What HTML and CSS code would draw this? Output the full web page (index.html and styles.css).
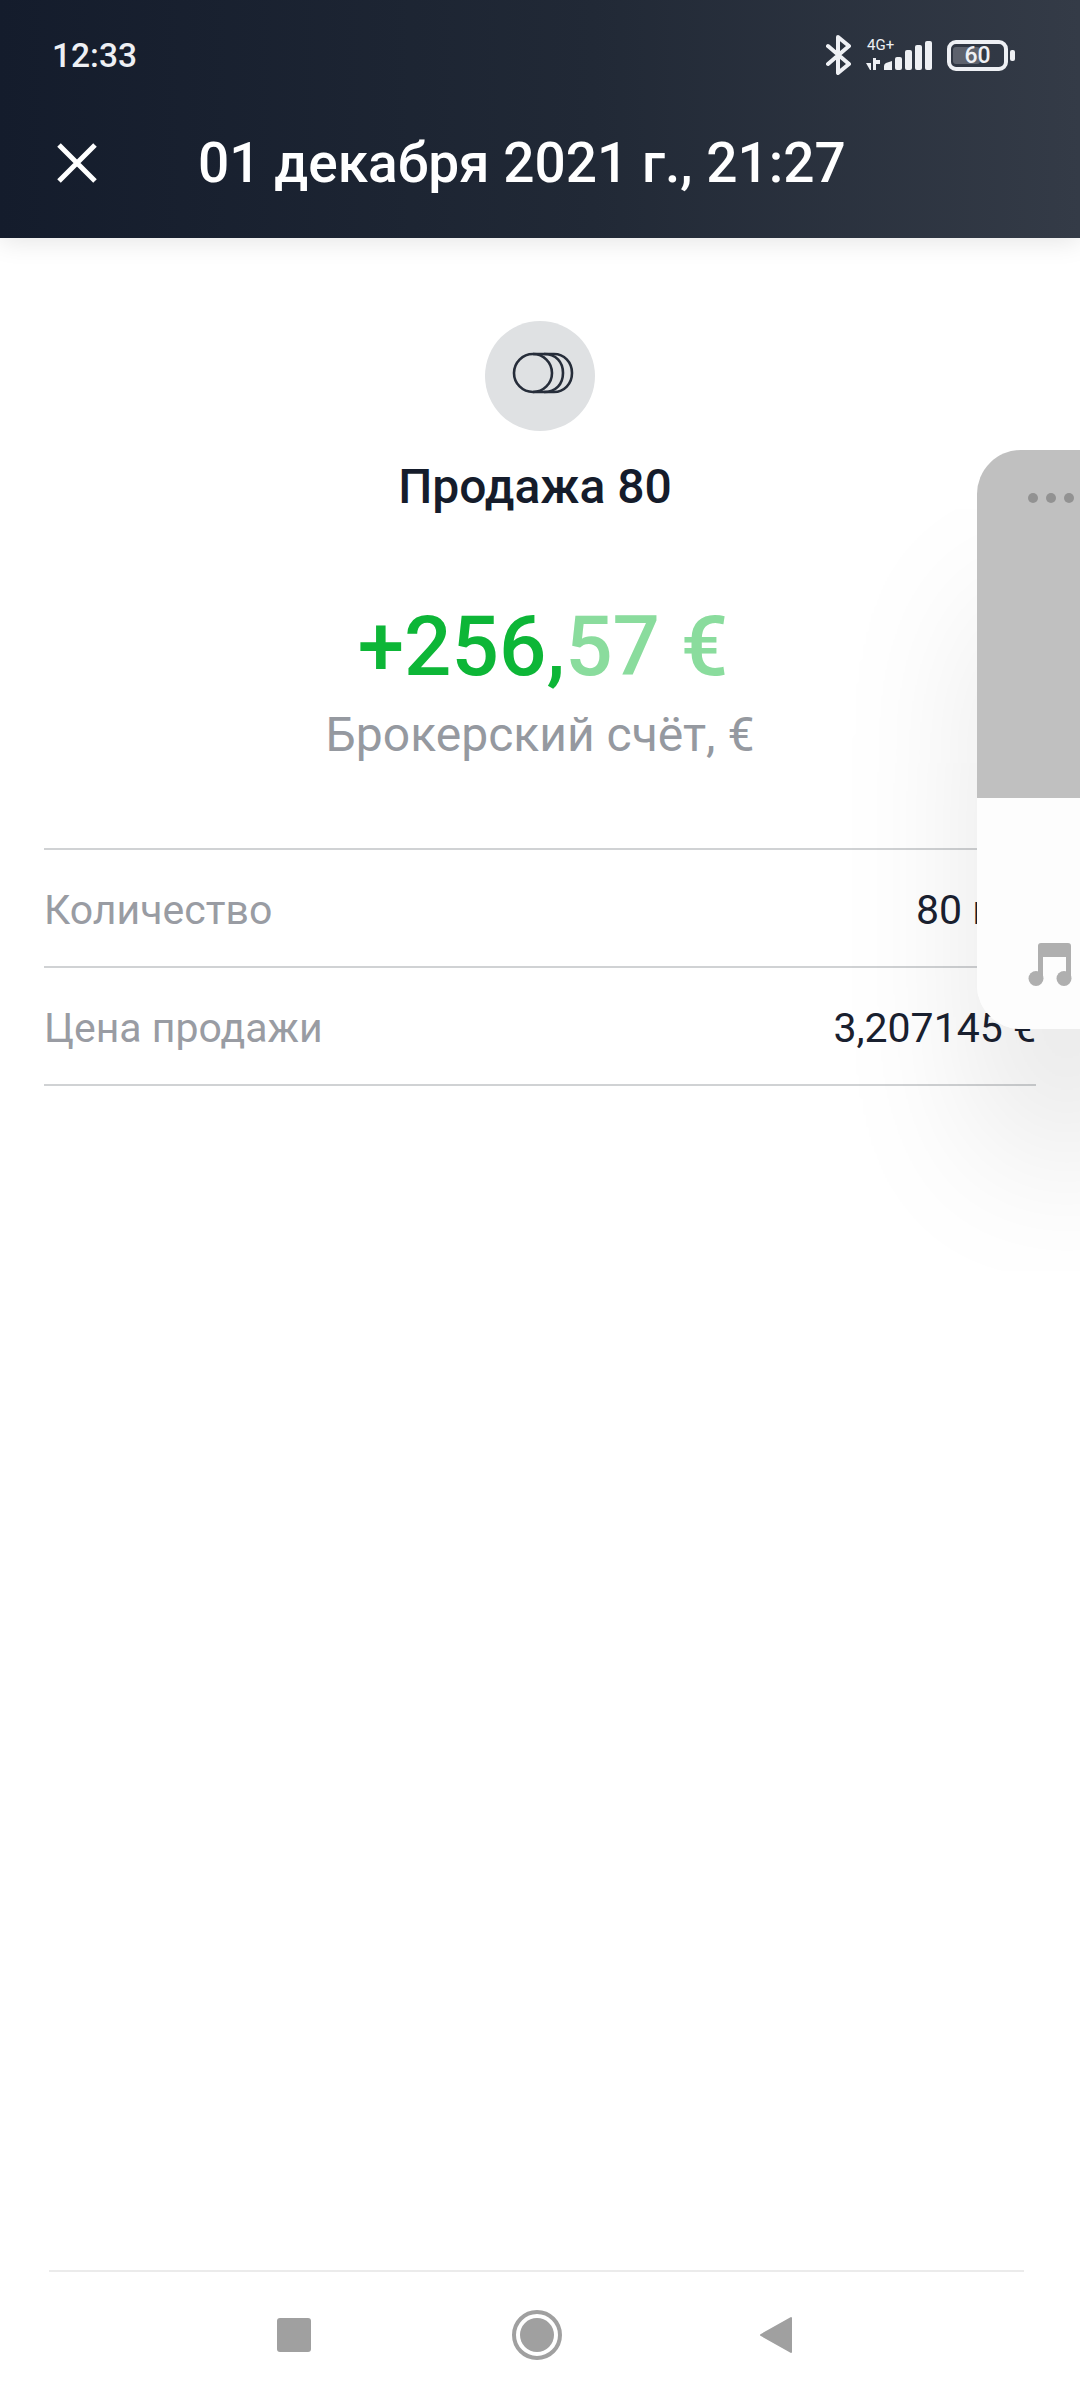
FILE: index.html
```html
<!DOCTYPE html>
<html lang="ru">
<head>
  <meta charset="UTF-8">
  <meta name="viewport" content="width=device-width, initial-scale=1.0">
  <title>Продажа 80</title>
  <link rel="stylesheet" href="styles.css">
</head>
<body>
  <div class="screen">
    <header class="header">
      <div class="status-bar">
        <span class="status-time">12:33</span>
        <div class="status-icons">
          <svg class="icon-bt" width="26" height="40" viewBox="0 0 26 40">
            <path d="M2 11 L23 29 L12 38 L12 2 L23 11 L2 29" fill="none" stroke="#eef0f4" stroke-width="4" stroke-linejoin="round" stroke-linecap="round"/>
          </svg>
          <svg class="icon-signal" width="66" height="34" viewBox="0 0 66 34">
            <text x="1" y="12" class="signal-label">4G+</text>
            <path d="M0 25 H5 V32 H4 Z M7 20 H10 V22 H14 V26 H10 V32 H7 Z" fill="#eef0f4"/>
            <path d="M18 32 V28 Q18 26 20 25 L26 23 V32 Z" fill="#eef0f4"/>
            <rect x="29" y="19" width="7" height="13" rx="2" fill="#eef0f4"/>
            <rect x="39" y="12" width="7" height="20" rx="2" fill="#eef0f4"/>
            <rect x="49" y="7" width="7" height="25" rx="2" fill="#eef0f4"/>
            <rect x="59" y="3" width="7" height="29" rx="2" fill="#eef0f4"/>
          </svg>
          <div class="battery">
            <div class="battery-body">
              <div class="battery-fill"></div>
              <span class="battery-level">60</span>
            </div>
            <div class="battery-nub"></div>
          </div>
        </div>
      </div>
      <div class="title-bar">
        <svg class="icon-close" width="40" height="40" viewBox="0 0 40 40">
          <path d="M2 2 L38 38 M38 2 L2 38" stroke="#fff" stroke-width="5" fill="none"/>
        </svg>
        <h1 class="title">01 декабря 2021 г., 21:27</h1>
      </div>
    </header>

    <main class="content">
      <div class="op-icon">
        <svg width="64" height="44" viewBox="0 0 64 44">
          <path d="M32 3 H42 C52 3 60 11 60 22 C60 33 52 41 42 41 H32" fill="none" stroke="#262d3a" stroke-width="2.6"/>
          <path d="M32 3 C44 3 51 11 51 22 C51 33 44 41 32 41" fill="none" stroke="#262d3a" stroke-width="2.6"/>
          <circle cx="21" cy="22" r="19" fill="none" stroke="#262d3a" stroke-width="2.6"/>
          <path d="M21 3 H32 M21 41 H32" stroke="#262d3a" stroke-width="2.6"/>
        </svg>
      </div>
      <div class="op-name">Продажа 80</div>
      <div class="amount">+256,<span class="amount-cents">57 €</span></div>
      <div class="account">Брокерский счёт, €</div>

      <div class="details">
        <div class="row">
          <span class="row-label">Количество</span>
          <span class="row-value">80 шт.</span>
        </div>
        <div class="row">
          <span class="row-label">Цена продажи</span>
          <span class="row-value">3,207145 €</span>
        </div>
      </div>
    </main>

    <nav class="nav-bar">
      <div class="nav-buttons">
        <div class="nav-square"></div>
        <div class="nav-home"><div class="nav-home-dot"></div></div>
        <svg class="nav-back" width="34" height="38" viewBox="0 0 34 38">
          <path d="M32 2 V36 L2 19 Z" fill="#a0a0a0" stroke="#a0a0a0" stroke-width="2" stroke-linejoin="round"/>
        </svg>
      </div>
    </nav>

    <!-- плавающее окно поверх экрана -->
    <aside class="float-window">
      <div class="float-top">
        <i class="dot"></i><i class="dot"></i><i class="dot"></i>
      </div>
      <div class="float-bottom">
        <svg width="44" height="44" viewBox="0 0 44 44">
          <path d="M10 3 Q10 0 13 0 H40 Q43 0 43 3 V37 H38 V14 H15 V37 H10 Z" fill="#afafaf"/>
          <circle cx="8" cy="35.5" r="7.5" fill="#afafaf"/>
          <circle cx="36" cy="35.5" r="7.5" fill="#afafaf"/>
        </svg>
      </div>
    </aside>
  </div>
</body>
</html>
```

FILE: styles.css
```css
*{
  margin: 0;
  padding: 0;
  box-sizing: border-box;
}
html,body{
  width: 1080px;
  height: 2400px;
  overflow: hidden;
  background: #fff;
}
body{
  font-family: Roboto, "Noto Sans", sans-serif;
}
.screen{
  width: 1080px;
  height: 2400px;
  display: flex;
  flex-direction: column;
  position: relative;
  overflow: hidden;
}

/* header */
.header{
  height: 238px;
  flex: none;
  background: linear-gradient(90deg, #141c2c 0%, #212936 55%, #343b47 100%);
  box-shadow: 0 4px 24px rgba(0,0,0,.1);
  position: relative;
  z-index: 1;
}
.status-bar{
  height: 110px;
  display: flex;
  align-items: center;
  justify-content: space-between;
  padding: 0 65px 0 52px;
}
.status-time{
  font-size: 33.5px;
  font-weight: 500;
  color: #eef0f4;
}
.status-icons{
  display: flex;
  align-items: center;
}
.icon-bt{
  margin-right: 14px;
}
.icon-signal{
  margin-right: 15px;
}
.signal-label{
  font-family: Roboto, sans-serif;
  font-size: 15px;
  fill: #eef0f4;
}
.battery{
  display: flex;
  align-items: center;
  gap: 2px;
}
.battery-body{
  width: 61px;
  height: 31px;
  border: 4px solid #eef0f4;
  border-radius: 9px;
  position: relative;
  display: flex;
  align-items: center;
  justify-content: center;
}
.battery-fill{
  position: absolute;
  left: 2px;
  top: 3px;
  bottom: 3px;
  width: 27px;
  border-radius: 3px;
  background: #5d626d;
}
.battery-level{
  font-size: 23px;
  font-weight: 500;
  color: #eef0f4;
  position: relative;
}
.battery-nub{
  width: 5px;
  height: 11px;
  border-radius: 2px;
  background: #eef0f4;
}
.title-bar{
  height: 106px;
  display: flex;
  align-items: center;
  padding-left: 57px;
}
.icon-close{
  margin-right: 101px;
}
.title{
  font-size: 55px;
  font-weight: 500;
  color: #fff;
  white-space: nowrap;
}

/* main */
.content{
  flex: 1;
  display: flex;
  flex-direction: column;
  align-items: center;
  padding: 83px 44px 0;
}
.op-icon{
  width: 110px;
  height: 110px;
  border-radius: 50%;
  background: #dfe1e3;
  display: flex;
  align-items: center;
  justify-content: center;
}
.op-icon svg{
  margin: 0 0 6px 8px;
}
.op-name{
  margin: 28px 10px 0 0;
  font-size: 48px;
  line-height: 56px;
  font-weight: 500;
  color: #151c2b;
}
.amount{
  margin: 84px 0 0 6px;
  font-size: 83.5px;
  line-height: 96px;
  font-weight: 500;
  color: #0db637;
}
.amount-cents{
  color: #8adc9d;
}
.account{
  margin-top: 12px;
  font-size: 48px;
  line-height: 56px;
  color: #9599a0;
}
.details{
  width: 100%;
  margin-top: 85px;
  border-top: 2px solid #d0d2d4;
}
.row{
  height: 118px;
  padding-top: 4px;
  display: flex;
  align-items: center;
  justify-content: space-between;
  border-bottom: 2px solid #d0d2d4;
  font-size: 41px;
}
.row-label{
  color: #999ca3;
}
.row-value{
  color: #1a2130;
}

/* nav bar */
.nav-bar{
  flex: none;
  height: 130px;
  margin: 0 56px 0 49px;
  border-top: 2px solid #ebebeb;
}
.nav-buttons{
  display: flex;
  justify-content: space-between;
  align-items: flex-start;
  padding-top: 38px;
  margin: 0 231px 0 228px;
  height: 100%;
}
.nav-square{
  width: 34px;
  height: 34px;
  margin-top: 8px;
  border-radius: 3px;
  background: #a0a0a0;
}
.nav-home{
  width: 50px;
  height: 50px;
  margin-left: 4px;
  border-radius: 50%;
  border: 4px solid #a0a0a0;
  display: flex;
  align-items: center;
  justify-content: center;
}
.nav-home-dot{
  width: 34px;
  height: 34px;
  border-radius: 50%;
  background: #a0a0a0;
}
.nav-back{
  margin-top: 6px;
}

/* floating window */
.float-window{
  position: absolute;
  left: 977px;
  top: 450px;
  width: 180px;
  height: 579px;
  border-radius: 44px;
  overflow: hidden;
  box-shadow: 0 140px 160px -20px rgba(0,0,0,.13);
}
.float-top{
  height: 348px;
  background: #c0c0c0;
  display: flex;
  gap: 8px;
  padding: 43px 0 0 51px;
}
.dot{
  width: 10px;
  height: 10px;
  border-radius: 50%;
  background: #929292;
}
.float-bottom{
  height: 231px;
  background: #fdfdfd;
  padding: 145px 0 0 51px;
}
```
